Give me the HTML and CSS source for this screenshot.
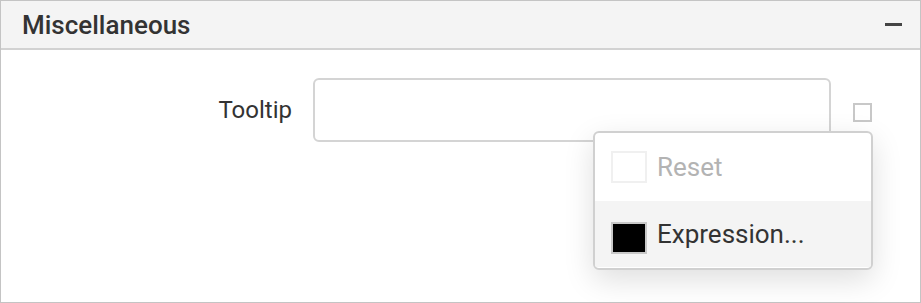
FILE: index.html
```html
<!DOCTYPE html>
<html>
<head>
<meta charset="utf-8">
<link rel="stylesheet" href="styles.css">
</head>
<body>
<div class="panel">
  <div class="header">
    <span class="title">Miscellaneous</span>
    <span class="collapse"></span>
  </div>
  <div class="body">
    <div class="row">
      <label class="label">Tooltip</label>
      <div class="input"></div>
      <span class="check"></span>
    </div>
    <div class="menu">
      <div class="item disabled"><span class="swatch empty"></span><span>Reset</span></div>
      <div class="item active"><span class="swatch black"></span><span>Expression...</span></div>
    </div>
  </div>
</div>
</body>
</html>
```
FILE: styles.css
```css
* { box-sizing: border-box; }
html, body { margin: 0; padding: 0; background: #fff; }
body { font-family: Roboto, "Liberation Sans", sans-serif; color: #333; }
.panel {
  width: 921px;
  height: 303px;
  border: 1px solid #c4c4c4;
  display: flex;
  flex-direction: column;
}
.header {
  height: 49px;
  background: #f4f4f4;
  border-bottom: 2px solid #d2d2d2;
  display: flex;
  align-items: center;
  justify-content: space-between;
  padding: 0 18px 0 21px;
}
.title { font-size: 26px; font-weight: 500; color: #333; }
.collapse { width: 17px; height: 3px; background: #444; margin-top: -1px; }
.body { position: relative; flex: 1; }
.row {
  display: flex;
  align-items: center;
  padding: 28px 0 0 0;
}
.label {
  width: 291px;
  text-align: right;
  font-size: 24px;
  color: #333;
  margin-right: 21px;
}
.input {
  width: 518px;
  height: 64px;
  border: 2px solid #d4d4d4;
  border-radius: 6px;
  background: #fff;
}
.check {
  width: 19px;
  height: 19px;
  border: 2px solid #c8c8c8;
  margin-left: 22px;
  margin-top: 4px;
}
.menu {
  position: absolute;
  left: 592px;
  top: 81px;
  width: 280px;
  height: 139px;
  background: #fff;
  border: 2px solid #d0d0d0;
  border-radius: 6px;
  box-shadow: 0 10px 30px rgba(0,0,0,0.13);
  overflow: hidden;
  display: flex;
  flex-direction: column;
}
.item {
  height: 68px;
  display: flex;
  align-items: center;
  padding-left: 16px;
  font-size: 26px;
  gap: 10px;
}
.item.disabled { color: #b3b3b3; }
.item.active { background: #f4f4f4; color: #333; height: 66px; }
.swatch { width: 36px; height: 32px; border: 2px solid #f0f0f0; }
.swatch.black { background: #000; border-color: #c8c8c8; margin-top: 8px; }
```
